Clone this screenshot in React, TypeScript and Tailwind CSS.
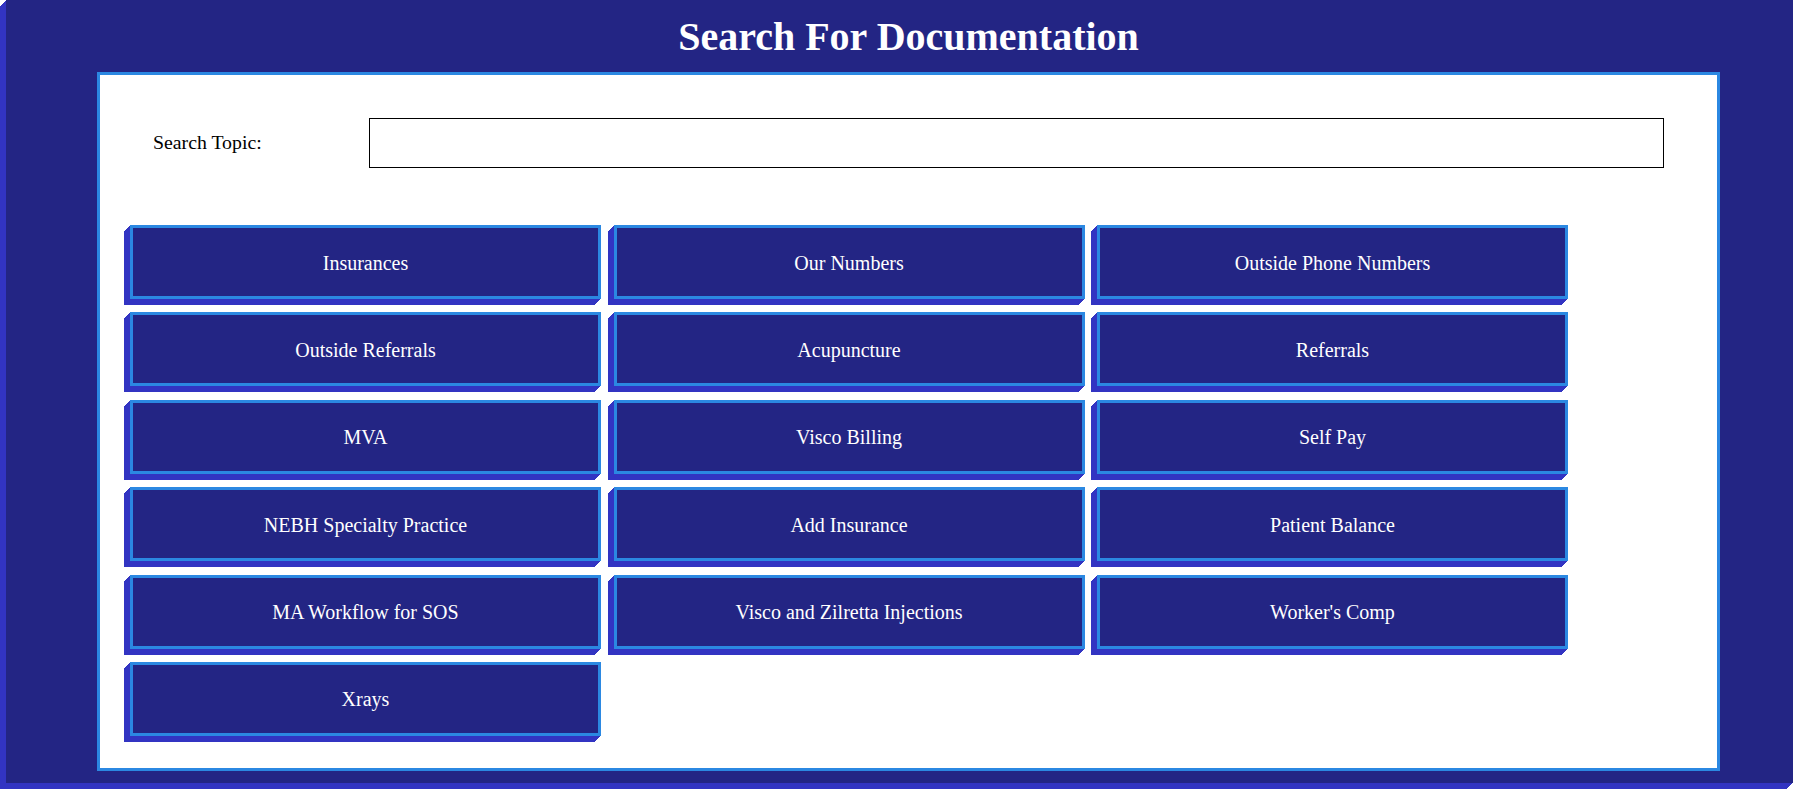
import { useState } from "react";

const topics: string[] = [
  "Insurances",
  "Our Numbers",
  "Outside Phone Numbers",
  "Outside Referrals",
  "Acupuncture",
  "Referrals",
  "MVA",
  "Visco Billing",
  "Self Pay",
  "NEBH Specialty Practice",
  "Add Insurance",
  "Patient Balance",
  "MA Workflow for SOS",
  "Visco and Zilretta Injections",
  "Worker's Comp",
  "Xrays",
];

const TopicButton: React.FC<{ text: string }> = ({ text }) => {
  return (
    <button className="h-[74px] w-[471px] border-[3px] border-[#2b88e2] bg-[#232584] pt-[1px] text-[20px] text-white shadow-[-1px_1px_0_#3234c2,-2px_2px_0_#3234c2,-3px_3px_0_#3234c2,-4px_4px_0_#3234c2,-5px_5px_0_#3234c2,-6px_6px_0_#3234c2]">
      {text}
    </button>
  );
};

export default function App() {
  const [query, setQuery] = useState("");

  const shown = topics.filter((t) =>
    t.toLowerCase().includes(query.trim().toLowerCase())
  );

  return (
    <div className="min-h-screen bg-white font-['Liberation_Serif',serif]">
      <div className="ml-[6px] w-[calc(100%-6px)] bg-[#232584] pl-[91px] pt-[14px] pb-[12px] shadow-[-1px_1px_0_#3234c2,-2px_2px_0_#3234c2,-3px_3px_0_#3234c2,-4px_4px_0_#3234c2,-5px_5px_0_#3234c2,-6px_6px_0_#3234c2]">
        <div className="w-[1623px]">
          <h1 className="mb-[12px] text-center text-[40px] leading-[46px] font-bold text-white">
            Search For Documentation
          </h1>
          <div className="h-[699px] border-[3px] border-[#2b88e2] bg-white">
            <div className="flex items-center px-[53px] pt-[43px]">
              <label className="w-[216px] text-[19.8px] text-black">
                Search Topic:
              </label>
              <input
                value={query}
                onChange={(e) => setQuery(e.target.value)}
                className="h-[50px] flex-1 border border-black bg-white px-2 text-[18px] outline-none"
              />
            </div>
            <div className="mt-[57px] ml-[30px] grid grid-cols-[repeat(3,471px)] gap-x-[12.5px] gap-y-[13.4px]">
              {shown.map((t) => (
                <TopicButton key={t} text={t} />
              ))}
            </div>
          </div>
        </div>
      </div>
    </div>
  );
}
